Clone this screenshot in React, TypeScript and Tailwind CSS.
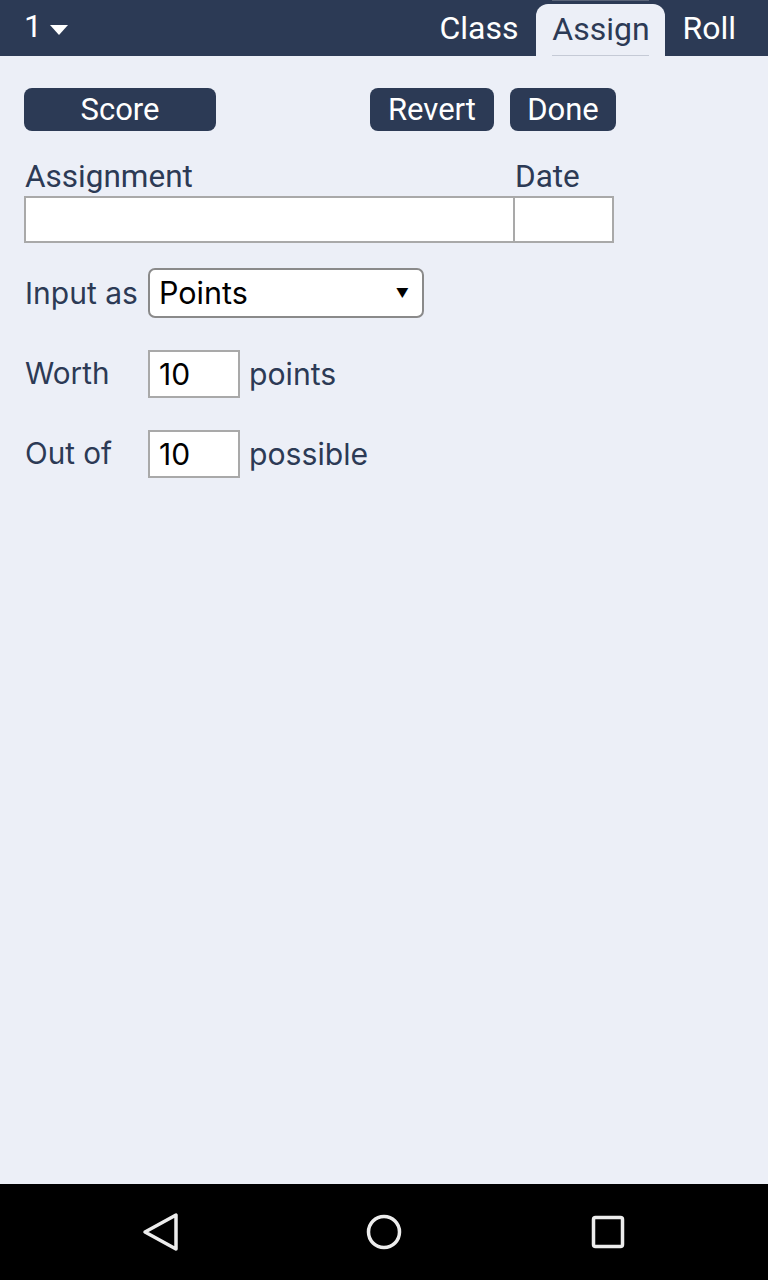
import React from "react";

export default function App() {
  const roboto = { fontFamily: "Roboto, 'Liberation Sans', sans-serif" };
  const inter = { fontFamily: "Inter, 'Liberation Sans', sans-serif" };
  return (
    <div className="w-[768px] h-[1280px] flex flex-col bg-[#eceff7] overflow-hidden" style={roboto}>
      <div className="h-[56px] bg-[#2c3a55] flex items-end text-white shrink-0">
        <div className="flex items-center h-[56px] pl-[24px] gap-[8px] pb-[4px]">
          <span className="text-[32px] leading-none">1</span>
          <svg width="18" height="11" viewBox="0 0 18 11" className="mt-[8px]">
            <polygon points="0,0 18,0 9,10" fill="white" />
          </svg>
        </div>
        <div className="ml-auto flex items-end h-[56px] pr-[32px]">
          <div className="h-[52px] flex items-center pb-[4px] px-[18px] text-[32px] leading-none">Class</div>
          <div className="h-[52px] w-[129px] flex flex-col items-center justify-center pb-[2px] bg-[#eceff7] text-[#2c3a55] rounded-t-[12px] text-[32px] leading-none relative">
            <div className="absolute top-[-4px] left-[16px] right-[16px] h-px bg-[#5a6478]" />
            <span>Assign</span>
            <div className="absolute bottom-0 left-[16px] right-[16px] h-px bg-[#c5cad6]" />
          </div>
          <div className="h-[52px] flex items-center pb-[4px] pl-[17px] text-[32px] leading-none">Roll</div>
        </div>
      </div>

      <div className="flex-1 px-[24px] pt-[32px] text-[#2c3a55]">
        <div className="flex items-center h-[43px]">
          <button className="w-[192px] h-[43px] bg-[#2c3a55] text-white rounded-[8px] text-[31px] leading-none">Score</button>
          <button className="ml-[154px] w-[124px] h-[43px] bg-[#2c3a55] text-white rounded-[8px] text-[31px] leading-none">Revert</button>
          <button className="ml-[16px] w-[106px] h-[43px] bg-[#2c3a55] text-white rounded-[8px] text-[31px] leading-none">Done</button>
        </div>

        <div className="flex mt-[28px] w-[590px]">
          <div className="w-[491px] flex flex-col">
            <span className="text-[31.5px] leading-[36px] pl-[1px]">Assignment</span>
            <div className="h-[47px] mt-[1px] bg-white border-2 border-[#a9a9a9]" />
          </div>
          <div className="w-[99px] flex flex-col">
            <span className="text-[31.5px] leading-[36px] pl-[0px]">Date</span>
            <div className="h-[47px] mt-[1px] bg-white border-2 border-l-0 border-[#a9a9a9]" />
          </div>
        </div>

        <div style={inter}>
          <div className="flex items-center mt-[25px] h-[50px]">
            <span className="w-[124px] text-[30px] leading-none pl-[1px]">Input as</span>
            <div className="w-[276px] h-[50px] bg-white border-2 border-[#8a8a8a] rounded-[7px] flex items-center pl-[9px] pr-[13px] text-black text-[30.5px]">
              <span className="flex-1 leading-none">Points</span>
              <span className="text-[13px] leading-none">▼</span>
            </div>
          </div>

          <div className="flex items-center mt-[32px] h-[48px]">
            <span className="w-[124px] text-[29.7px] leading-none pl-[1px]">Worth</span>
            <div className="w-[92px] h-[48px] bg-white border-2 border-[#a9a9a9] flex items-center pl-[9px] text-black text-[30px] leading-none">10</div>
            <span className="ml-[9px] text-[30.2px] leading-none">points</span>
          </div>

          <div className="flex items-center mt-[32px] h-[48px]">
            <span className="w-[124px] text-[29.7px] leading-none pl-[1px]">Out of</span>
            <div className="w-[92px] h-[48px] bg-white border-2 border-[#a9a9a9] flex items-center pl-[9px] text-black text-[30px] leading-none">10</div>
            <span className="ml-[9px] text-[30.2px] leading-none">possible</span>
          </div>
        </div>
      </div>

      <div className="h-[96px] bg-black shrink-0 flex items-center justify-between px-[140px]">
        <svg width="40" height="40" viewBox="0 0 40 40">
          <polygon points="36,3 36,37 5,20" fill="none" stroke="#ededed" strokeWidth="3.5" strokeLinejoin="round" />
        </svg>
        <svg width="40" height="40" viewBox="0 0 40 40">
          <circle cx="20" cy="20" r="15.5" fill="none" stroke="#ededed" strokeWidth="3.5" />
        </svg>
        <svg width="40" height="40" viewBox="0 0 40 40">
          <rect x="5.5" y="5.5" width="29" height="29" rx="2" fill="none" stroke="#ededed" strokeWidth="3.5" />
        </svg>
      </div>
    </div>
  );
}
